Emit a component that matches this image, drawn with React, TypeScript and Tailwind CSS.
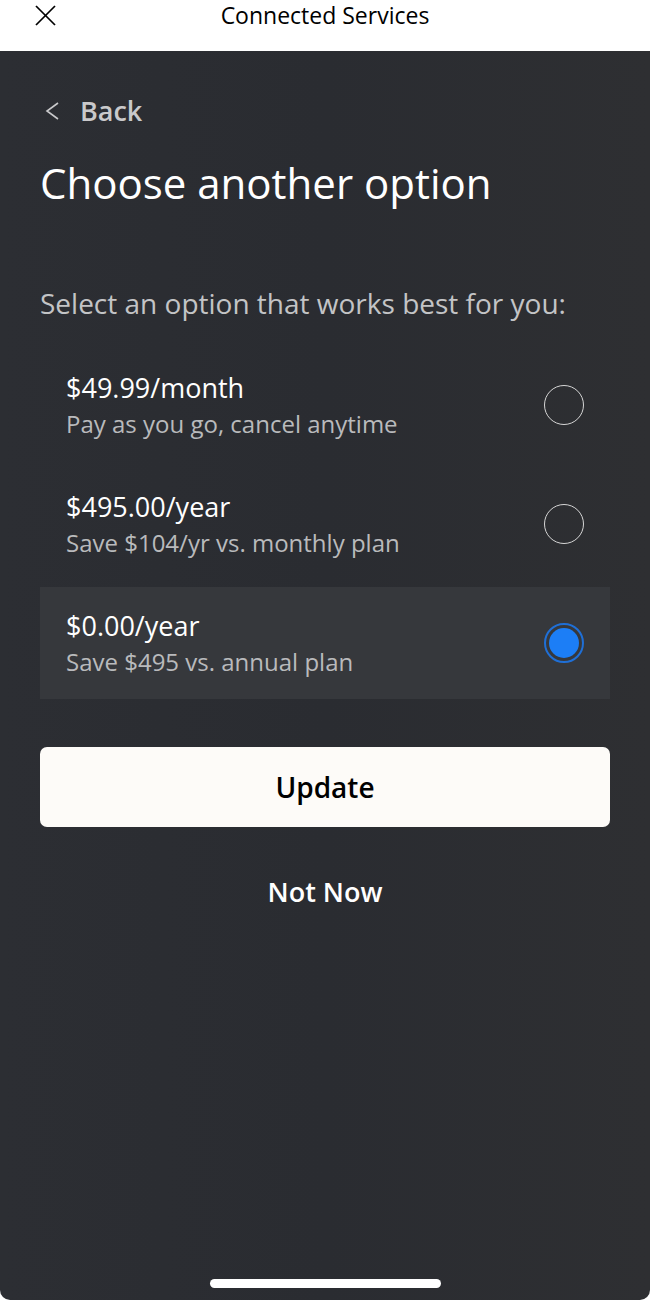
const options = [
  { price: "$49.99/month", note: "Pay as you go, cancel anytime", selected: false },
  { price: "$495.00/year", note: "Save $104/yr vs. monthly plan", selected: false },
  { price: "$0.00/year", note: "Save $495 vs. annual plan", selected: true },
];

export default function App() {
  return (
    <div
      className="flex h-[1300px] w-[650px] flex-col bg-white"
      style={{ fontFamily: '"Open Sans", "Noto Sans", sans-serif' }}
    >
      {/* Top bar */}
      <header className="relative flex h-[51px] shrink-0 items-start justify-center">
        <svg
          className="absolute left-[35px] top-[5px]"
          width="21"
          height="21"
          viewBox="0 0 21 21"
          stroke="black"
          strokeWidth="1.7"
        >
          <line x1="1" y1="1" x2="20" y2="20" />
          <line x1="20" y1="1" x2="1" y2="20" />
        </svg>
        <h1 className="text-[23px] leading-[30px] text-black">Connected Services</h1>
      </header>

      {/* Panel */}
      <main className="flex flex-1 flex-col rounded-b-[10px] bg-gradient-to-r from-[#2c2e33] via-[#2a2c31] to-[#2e2f32] px-[40px]">
        <button className="mt-[43px] flex items-center gap-[20px] pl-[5px] text-[#c9c9cb]">
          <svg width="15" height="18" viewBox="0 0 15 18" fill="none" stroke="currentColor" strokeWidth="1.6">
            <polyline points="13,1 2,9 13,17" />
          </svg>
          <span className="text-[27px] font-semibold leading-[34px]">Back</span>
        </button>

        <h2 className="mt-[30px] text-[42px] leading-[50px] text-white">Choose another option</h2>

        <p className="mt-[77px] text-[28px] leading-[36px] text-[#c3c4c6]">
          Select an option that works best for you:
        </p>

        <div className="mt-[28px] flex flex-col gap-[7px]">
          {options.map((o) => (
            <div
              key={o.price}
              className={`flex h-[112px] items-center justify-between pl-[26px] pr-[26px] ${
                o.selected ? "bg-[#36383c]" : ""
              }`}
            >
              <div className="flex flex-col">
                <span className="text-[27px] leading-[34px] text-white">{o.price}</span>
                <span className="mt-[4px] text-[24px] leading-[30px] text-[#b9babc]">{o.note}</span>
              </div>
              {o.selected ? (
                <span className="flex h-[40px] w-[40px] items-center justify-center rounded-full border-[2px] border-[#1f6fd6]">
                  <span className="h-[30px] w-[30px] rounded-full bg-[#1c7ef6]" />
                </span>
              ) : (
                <span className="h-[40px] w-[40px] rounded-full border-[1.5px] border-[#d6d6d6]" />
              )}
            </div>
          ))}
        </div>

        <button className="mt-[48px] h-[80px] w-full shrink-0 rounded-[7px] bg-[#fdfbf8] text-[28px] font-semibold text-black">
          Update
        </button>

        <button className="mt-[45px] text-[27px] font-semibold leading-[40px] text-white">Not Now</button>

        <div className="mt-auto mb-[12px] flex justify-center">
          <span className="h-[9px] w-[231px] rounded-full bg-white" />
        </div>
      </main>
    </div>
  );
}
